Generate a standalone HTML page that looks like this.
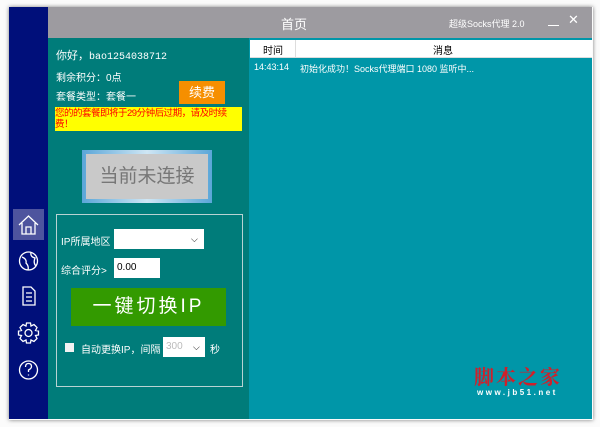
<!DOCTYPE html>
<html><head><meta charset="utf-8"><style>
body{margin:0;width:600px;height:427px;background:#fbfbfb;position:relative;overflow:hidden;font-family:"Liberation Sans","Noto Sans CJK SC",sans-serif;}
.a{position:absolute}
.t{color:#fff;font-size:10px;white-space:nowrap}
</style></head><body>
<div class="a" style="left:9px;top:7px;width:584px;height:413px;box-shadow:0 0 4px rgba(0,0,0,.5)"></div>
<div class="a" style="left:9px;top:7px;width:39px;height:412px;background:#000f7a"></div>
<div class="a" style="left:48px;top:7px;width:544px;height:31px;background:#9d9ba0"></div>
<div class="a t" style="left:281px;top:14px;font-size:13px">首页</div>
<div class="a t" style="left:449px;top:17px;font-size:9px">超级Socks代理 2.0</div>
<div class="a" style="left:548px;top:25px;width:11px;height:1px;background:#fff"></div>
<div class="a t" style="left:568px;top:12px;font-size:13px">✕</div>
<div class="a" style="left:48px;top:38px;width:201px;height:381px;background:#007c7a"></div>
<div class="a" style="left:249px;top:38px;width:343px;height:381px;background:#0096a8"></div>
<div class="a" style="left:250px;top:40px;width:342px;height:17px;background:#fff;border-bottom:1px solid #ddd"></div>
<div class="a" style="left:295px;top:40px;width:1px;height:17px;background:#ddd"></div>
<div class="a" style="left:263px;top:42px;font-size:10px">时间</div>
<div class="a" style="left:433px;top:42px;font-size:10px">消息</div>
<div class="a t" style="left:254px;top:62px;font-size:9px">14:43:14</div>
<div class="a t" style="left:300px;top:62px;font-size:9px">初始化成功！Socks代理端口 1080 监听中...</div>
<div class="a t" style="left:56px;top:47px;font-size:11px">你好，<span style="font-family:'Liberation Mono',monospace;font-size:10px">bao1254038712</span></div>
<div class="a t" style="left:56px;top:69px">剩余积分：0点</div>
<div class="a t" style="left:56px;top:88px">套餐类型：套餐一</div>
<div class="a" style="left:179px;top:81px;width:46px;height:23px;background:#f68f00;color:#fff;font-size:13px;text-align:center;line-height:23px">续费</div>
<div class="a" style="left:55px;top:107px;width:187px;height:24px;background:#ffff00;color:#f00;font-size:9.5px;line-height:11px;letter-spacing:-.5px;padding-top:1px;box-sizing:border-box">您的的套餐即将于29分钟后过期，请及时续费！</div>
<div class="a" style="left:82px;top:150px;width:130px;height:53px;background:linear-gradient(90deg,#5aa6d8,#cfe6f4,#5aa6d8)"></div>
<div class="a" style="left:86px;top:154px;width:122px;height:45px;background:#c9c9c9;color:#777;font-size:19px;text-align:center;line-height:45px">当前未连接</div>
<div class="a" style="left:56px;top:214px;width:185px;height:171px;border:1px solid #b9d3d3"></div>
<div class="a t" style="left:61px;top:233px">IP所属地区</div>
<div class="a" style="left:114px;top:229px;width:90px;height:20px;background:#fff"></div>
<div class="a" style="left:191px;top:234px;font-size:9px">⌵</div>
<div class="a t" style="left:61px;top:262px">综合评分></div>
<div class="a" style="left:114px;top:258px;width:46px;height:20px;background:#fff;font-size:10px;line-height:20px;text-indent:3px">0.00</div>
<div class="a" style="left:71px;top:288px;width:155px;height:38px;background:#339a00;color:#fff;font-size:19px;text-align:center;line-height:38px;letter-spacing:3px">一键切换IP</div>
<div class="a" style="left:65px;top:343px;width:9px;height:9px;background:#f2f2f2"></div>
<div class="a t" style="left:81px;top:341px">自动更换IP，间隔</div>
<div class="a" style="left:163px;top:337px;width:42px;height:20px;background:#fff;color:#bbb;font-size:10px;line-height:20px;text-indent:3px">300</div>
<div class="a" style="left:193px;top:342px;font-size:9px">⌵</div>
<div class="a t" style="left:210px;top:341px">秒</div>
<div class="a" style="left:13px;top:209px;width:31px;height:31px;background:#4e549e"></div>
<svg class="a" style="left:9px;top:205px" width="39" height="180" fill="none" stroke="#fff" stroke-width="1.3">
<path d="M10 20 L19.5 11 L29 20 M13 18 V29 H26 V18 M17 29 V22 H22 V29"/>
<circle cx="19.5" cy="56" r="9"/><path d="M13 52 Q18 54 17 58 Q20 61 19 65 M22 47 Q21 52 26 53 Q24 58 27 61"/>
<path d="M14 82 H22 L26 86 V100 H14 Z M17 88 H23 M17 92 H23 M17 96 H23"/>
<circle cx="19.5" cy="128" r="3.5"/><path d="M17.5 118 H21.5 L22 121 L25 119.5 L28 122.5 L26.5 125.5 L29.5 126 V130 L26.5 130.5 L28 133.5 L25 136.5 L22 135 L21.5 138 H17.5 L17 135 L14 136.5 L11 133.5 L12.5 130.5 L9.5 130 V126 L12.5 125.5 L11 122.5 L14 119.5 L17 121 Z"/>
<circle cx="19.5" cy="165" r="9"/><path d="M16.5 162 Q16.5 158.5 19.5 158.5 Q22.5 158.5 22.5 161.5 Q22.5 163.5 19.5 165 V167 M19.5 169.5 V170.5"/>
</svg>
<div class="a" style="left:474px;top:361px;color:#d0202a;font-size:20px;font-family:'Noto Serif CJK SC',serif;letter-spacing:2px;font-weight:bold">脚本之家</div>
<div class="a" style="left:477px;top:388px;color:#fff;font-size:8px;letter-spacing:2.5px;font-weight:bold">www.jb51.net</div>
</body></html>
